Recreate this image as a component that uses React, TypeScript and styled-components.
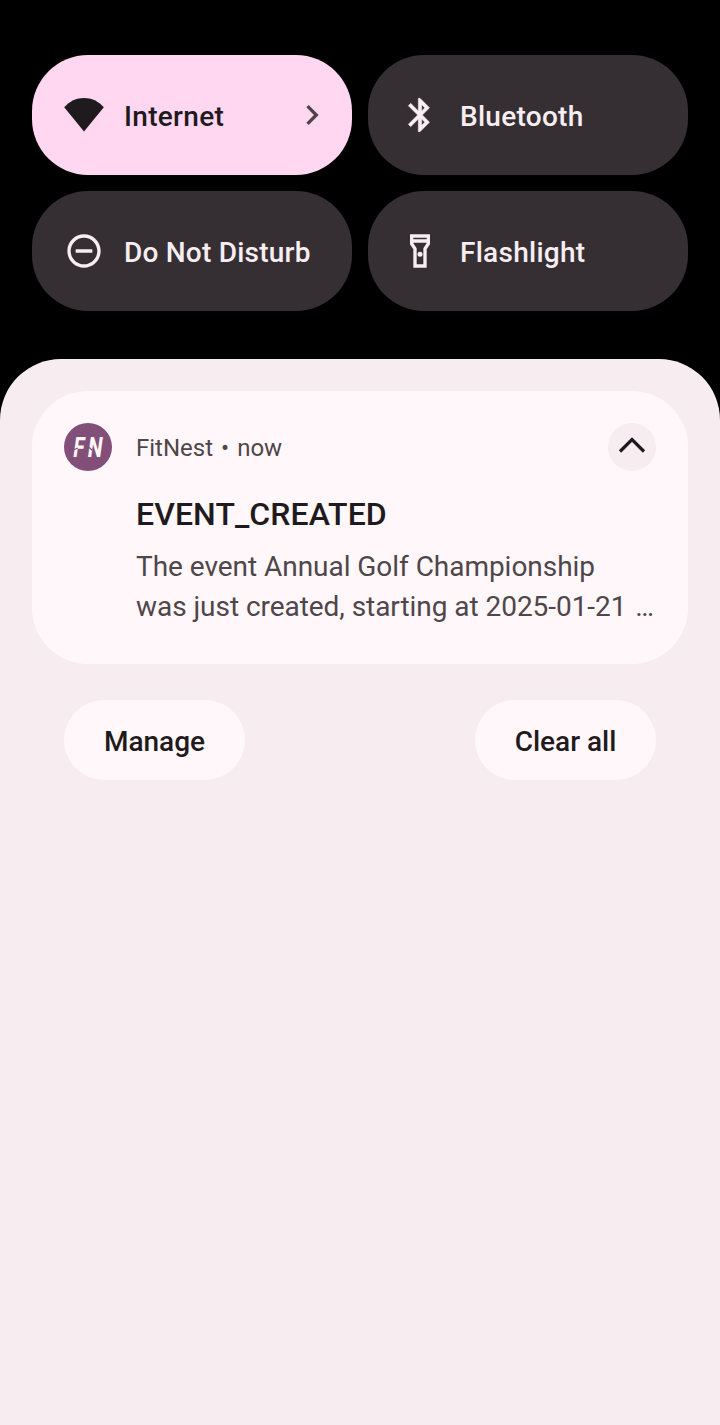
import React from 'react';
import styled, { createGlobalStyle } from 'styled-components';

const GlobalStyle = createGlobalStyle`
  * { box-sizing: border-box; }
  html, body { margin: 0; padding: 0; background: #000; }
  body { font-family: Roboto, "Liberation Sans", sans-serif; }
  button { font: inherit; border: 0; }
`;

const Screen = styled.main`
  display: flex;
  flex-direction: column;
  width: 720px;
  height: 1425px;
  overflow: hidden;
  background: #000;
`;

const QuickSettings = styled.section`
  display: grid;
  grid-template-columns: 1fr 1fr;
  grid-auto-rows: 120px;
  gap: 16px;
  padding: 55px 32px 48px;
`;

const Tile = styled.button<{ $active?: boolean }>`
  display: flex;
  align-items: center;
  padding: 0 20px 0 32px;
  border-radius: 56px;
  background: ${(p) => (p.$active ? '#ffd7f1' : '#352f33')};
  color: ${(p) => (p.$active ? '#1f1a1d' : '#f8eef2')};
`;

const TileIcon = styled.svg`
  flex: none;
  width: 40px;
  height: 40px;
  margin-right: 20px;
  fill: currentColor;
`;

const TileLabel = styled.span<{ $spacing: number }>`
  flex: 1;
  padding-top: 4px;
  text-align: left;
  font-size: 28px;
  font-weight: 500;
  line-height: 40px;
  letter-spacing: ${(p) => p.$spacing}px;
  white-space: nowrap;
`;

const TileChevron = styled.svg`
  flex: none;
  width: 40px;
  height: 40px;
  fill: #4f434a;
`;

const Shade = styled.section`
  flex: 1;
  padding: 32px;
  border-radius: 61px 61px 0 0;
  background: #f7edf0;
`;

const Card = styled.article`
  display: grid;
  grid-template-columns: 48px 1fr;
  column-gap: 24px;
  height: 273px;
  padding: 32px;
  border-radius: 56px;
  background: #fff7fa;
`;

const Content = styled.div`
  min-width: 0;
`;

const CardHeader = styled.header`
  display: flex;
  align-items: center;
  justify-content: space-between;
  height: 48px;
`;

const Source = styled.span`
  padding-top: 2px;
  color: #4f464a;
  font-size: 24px;
  line-height: 32px;
`;

const Dot = styled.span`
  margin: 0 8px;
`;

const Collapse = styled.button`
  display: flex;
  align-items: center;
  justify-content: center;
  width: 48px;
  height: 48px;
  padding: 0;
  border-radius: 50%;
  background: #f7edf0;
`;

const Title = styled.h2`
  margin: 23px 0 0;
  color: #1f1a1d;
  font-size: 32px;
  font-weight: 500;
  line-height: 40px;
  letter-spacing: 0.08px;
`;

const Body = styled.p`
  margin: 13px 0 0;
  color: #4f464a;
  font-size: 28px;
  line-height: 40px;
  white-space: nowrap;
`;

const Line = styled.span<{ $spacing: number }>`
  display: block;
  letter-spacing: ${(p) => p.$spacing}px;
`;

const Ellipsis = styled.span`
  margin-left: 2px;
`;

const Actions = styled.footer`
  display: flex;
  justify-content: space-between;
  padding: 36px 32px 0;
`;

const Action = styled.button`
  width: 181px;
  height: 80px;
  padding: 3px 0 0;
  border-radius: 40px;
  background: #fff7fa;
  color: #1f1a1d;
  font-size: 28px;
  font-weight: 500;
`;

const AppLogo = () => (
  <svg width="48" height="48" viewBox="0 0 48 48" role="img" aria-label="FitNest">
    <circle cx="24" cy="24" r="24" fill="#814f78" />
    <g fill="#fff7fa" fontFamily="Roboto" fontWeight="700" fontSize="28">
      <text transform="translate(8.300 34.200) skewX(-8) scale(0.720 1)">F</text>
      <text transform="translate(22.800 34.200) skewX(-8) scale(0.740 1)">N</text>
    </g>
    <path d="M8 27.500l6-2.500M24 23.500l4.500 4" fill="none" stroke="#814f78" strokeWidth="1.200" />
  </svg>
);

export default function App() {
  return (
    <>
      <GlobalStyle />
      <Screen>
        <QuickSettings>
          <Tile $active>
            <TileIcon viewBox="0 0 40 40">
              <path d="M20 36.500L.2 12.300C5.500 6.200 12.500 3 20 3s14.500 3.200 19.800 9.300z" />
            </TileIcon>
            <TileLabel $spacing={0.32}>Internet</TileLabel>
            <TileChevron viewBox="0 0 24 24">
              <path d="M10 6L8.590 7.410 13.170 12l-4.580 4.590L10 18l6-6z" />
            </TileChevron>
          </Tile>
          <Tile>
            <TileIcon viewBox="0 0 24 24">
              <path
                stroke="currentColor"
                strokeWidth="0.300"
                d="M17.710 7.710L12 2h-1v7.590L6.410 5 5 6.410 10.590 12 5 17.590 6.410 19 11 14.410V22h1l5.710-5.710-4.300-4.290 4.300-4.290zM13 5.830l1.880 1.880L13 9.590V5.830zm1.880 10.460L13 18.170v-3.760l1.880 1.880z"
              />
            </TileIcon>
            <TileLabel $spacing={0.28}>Bluetooth</TileLabel>
          </Tile>
          <Tile>
            <TileIcon viewBox="0 0 24 24">
              <path d="M7 11v2h10v-2H7zm5-9C6.480 2 2 6.480 2 12s4.480 10 10 10 10-4.480 10-10S17.520 2 12 2zm0 18c-4.410 0-8-3.590-8-8s3.590-8 8-8 8 3.590 8 8-3.590 8-8 8z" />
            </TileIcon>
            <TileLabel $spacing={0.22}>Do Not Disturb</TileLabel>
          </Tile>
          <Tile>
            <TileIcon viewBox="0 0 24 24">
              <path d="M18 2H6v6l2 3v11h8V11l2-3V2zm-2 2v1H8V4h8zm-2 6.400V20h-4v-9.600l-2-3V7h8v.4l-2 3z" />
              <circle cx="12" cy="14" r="1.500" />
            </TileIcon>
            <TileLabel $spacing={0.28}>Flashlight</TileLabel>
          </Tile>
        </QuickSettings>
        <Shade>
          <Card>
            <AppLogo />
            <Content>
              <CardHeader>
                <Source>FitNest<Dot>•</Dot>now</Source>
                <Collapse aria-label="Collapse">
                  <svg width="32" height="32" viewBox="0 0 32 32" fill="none" stroke="#1f1a1d" strokeWidth="3.200">
                    <path d="M4 20.500L16 8.500l12 12" />
                  </svg>
                </Collapse>
              </CardHeader>
              <Title>EVENT_CREATED</Title>
              <Body>
                <Line $spacing={-0.04}>The event Annual Golf Championship</Line>
                <Line $spacing={-0.05}>
                  was just created, starting at 2025-01-21 <Ellipsis>…</Ellipsis>
                </Line>
              </Body>
            </Content>
          </Card>
          <Actions>
            <Action>Manage</Action>
            <Action>Clear all</Action>
          </Actions>
        </Shade>
      </Screen>
    </>
  );
}
